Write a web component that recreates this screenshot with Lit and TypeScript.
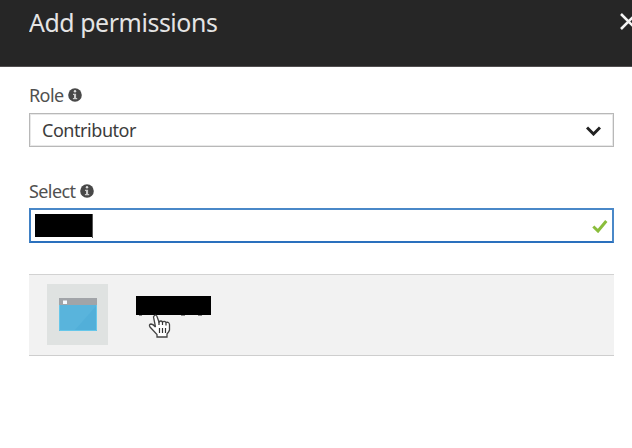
import { LitElement, html, css, svg } from "lit";
import { customElement } from "lit/decorators.js";

const infoIcon = html`<svg class="info" width="14" height="14" viewBox="0 0 14 14">
  ${svg`<circle cx="7" cy="7" r="6.8" fill="#484848"/>
  <circle cx="7" cy="3.3" r="1.2" fill="#ddd"/>
  <path d="M5 5.7H8.1V10H9.2V11.2H4.9V10H6V6.9H5Z" fill="#ccc"/>`}
</svg>`;

@customElement("app-root")
export class AppRoot extends LitElement {
  static styles = css`
    :host {
      display: block;
      height: 448px;
      overflow: hidden;
      background: #fff;
      color: #505050;
      font: 18px/24px "Noto Sans", "Open Sans", sans-serif;
    }
    header {
      display: flex;
      justify-content: space-between;
      box-sizing: border-box;
      height: 67px;
      padding: 4px 0 0 29px;
      overflow: hidden;
      background: #262626;
      border-bottom: 1px solid #514e4f;
    }
    h1 {
      margin: 0;
      font-size: 26px;
      line-height: 36px;
      font-weight: 400;
      letter-spacing: -0.45px;
      color: #e4e4e4;
      white-space: nowrap;
      transform: scaleX(0.957);
      transform-origin: left;
    }
    .close { flex: none; margin: 8px -7px 0 0; }
    main { padding: 16px 18px 0 29px; }
    .label {
      display: flex;
      align-items: center;
      height: 24px;
      gap: 5px;
      letter-spacing: -0.6px;
    }
    .info { flex: none; }
    .box {
      display: flex;
      align-items: center;
      justify-content: space-between;
      box-sizing: border-box;
      height: 34px;
      margin-top: 6px;
      border: 1px solid #b8b8b8;
      box-shadow: inset 0 0 0 1px #e8e8e8;
    }
    .select { padding: 0 12px; letter-spacing: -0.45px; color: #3c3c3c; }
    .second { margin-top: 32px; }
    .box.input {
      height: 35px;
      margin-top: 5px;
      padding: 0 4px;
      border: 2px solid #4a88c8;
      border-left-color: #3f80c4;
      border-bottom-color: #2a70bd;
      box-shadow: none;
    }
    .entry { display: flex; align-items: center; }
    .mask { background: #000; }
    .entry .mask { width: 57px; height: 23px; }
    .caret { width: 1px; height: 24px; background: #555; }
    .row {
      position: relative;
      display: flex;
      align-items: flex-start;
      box-sizing: border-box;
      height: 82px;
      margin-top: 31px;
      padding: 9px 0 0 18px;
      gap: 28px;
      background: #f2f2f2;
      border-top: 1px solid #d2d2d2;
      border-bottom: 1px solid #cecece;
    }
    .tile {
      display: grid;
      place-items: center;
      width: 61px;
      height: 61px;
      background: #dfe2e1;
    }
    .name { display: block; margin-top: 12px; }
    .cursor { position: absolute; left: 118px; top: 39px; }
  `;

  render() {
    return html`
      <header>
        <h1>Add permissions</h1>
        <svg class="close" width="20" height="20" viewBox="0 0 20 20">
          <path d="M2 2L17 17M17 2L2 17" fill="none" stroke="#f4f4f4" stroke-width="2.6"/>
        </svg>
      </header>
      <main>
        <div class="label"><span>Role</span>${infoIcon}</div>
        <div class="box select">
          <span>Contributor</span>
          <svg width="15" height="11" viewBox="0 0 15 11">
            <path d="M1 2.5L7.5 9L14 2.5" fill="none" stroke="#222" stroke-width="3"/>
          </svg>
        </div>
        <div class="label second"><span>Select</span>${infoIcon}</div>
        <div class="box input">
          <div class="entry"><div class="mask"></div><div class="caret"></div></div>
          <svg width="16" height="14" viewBox="0 0 16 14">
            <path d="M1.3 7.5L6 12L14.3 2" fill="none" stroke="#8abd3b" stroke-width="3"/>
          </svg>
        </div>
        <div class="row">
          <div class="tile">
            <svg width="38" height="33" viewBox="0 0 38 33">
              <rect width="38" height="33" fill="#59b4dc"/>
              <path d="M38 7V33H15Z" fill="#52afd9"/>
              <path d="M.5 7V32.5H37.5V7" fill="none" stroke="#66c7ea"/>
              <rect width="38" height="7" fill="#a1a4a8"/>
              <rect x="4" y="2.5" width="4" height="3.5" fill="#f7faff"/>
            </svg>
          </div>
          <svg class="name" width="75" height="20" viewBox="0 0 75 20">
            <rect width="75" height="19"/>
            <path d="M3 19.5H6M45 19.5H49M62 19.5H66" stroke="#888"/>
          </svg>
          <svg class="cursor" width="26" height="26" viewBox="0 0 26 26">
            <path d="M7.5 1.5Q9.2 .5 10 2.5L12 8Q14 6 15.5 8Q17.5 6.5 19 8.5Q22 7.5 22.5 10.5V16Q22 18 20 20V23H10V20.5L3 13Q1.5 10.5 4 10Q6 10 8.5 13L6.5 3Z" fill="#fff" stroke="#444" stroke-width="1.3"/>
            <path d="M12 7.5V11M15.5 8V11M19 9V11.5M12.5 14V19M15.5 14V19M18.5 14V19" fill="none" stroke="#333" stroke-width="1.2"/>
          </svg>
        </div>
      </main>
    `;
  }
}
